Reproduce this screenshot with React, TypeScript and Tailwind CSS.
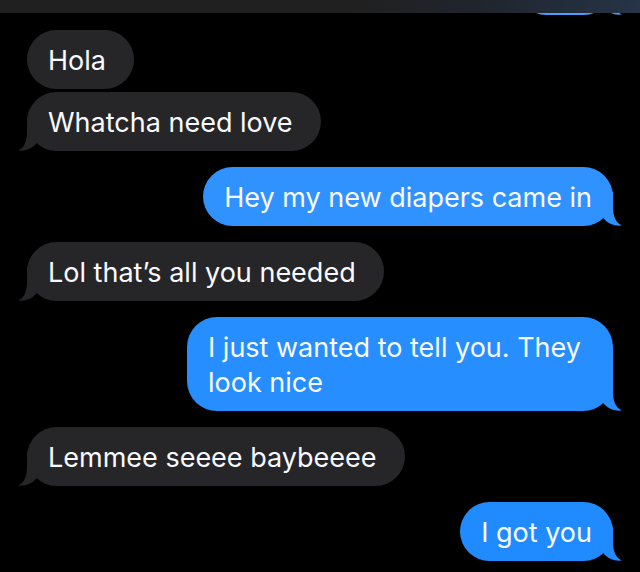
import clsx from 'clsx'

interface Message {
  id: number
  text: string
  mine: boolean
  // last message of a run carries the tail
  tail: boolean
  color: string
}

const messages: Message[] = [
  { id: 1, text: 'Hola', mine: false, tail: false, color: 'bg-[#262629] text-[#262629]' },
  { id: 2, text: 'Whatcha need love', mine: false, tail: true, color: 'bg-[#262629] text-[#262629]' },
  { id: 3, text: 'Hey my new diapers came in', mine: true, tail: true, color: 'bg-[#3092ff] text-[#3092ff]' },
  { id: 4, text: 'Lol that’s all you needed', mine: false, tail: true, color: 'bg-[#262629] text-[#262629]' },
  { id: 5, text: 'I just wanted to tell you. They look nice', mine: true, tail: true, color: 'bg-[#268eff] text-[#268eff]' },
  { id: 6, text: 'Lemmee seeee baybeeee', mine: false, tail: true, color: 'bg-[#262629] text-[#262629]' },
  { id: 7, text: 'I got you', mine: true, tail: true, color: 'bg-[#208bff] text-[#208bff]' },
]

function Tail({ mine }: { mine: boolean }) {
  return (
    <svg
      viewBox="0 0 29 34"
      aria-hidden="true"
      className={clsx('absolute bottom-0 h-[34px] w-[29px]', mine ? '-right-[9px]' : '-left-[9px] -scale-x-100')}
    >
      <path d="M10 0H20V15C20 24 22.5 30.5 29 33.6C21 34.4 15 31.5 10.5 26.5Z" fill="currentColor" />
    </svg>
  )
}

function Bubble({ message }: { message: Message }) {
  return (
    <li className={clsx('flex', message.mine ? 'justify-end' : 'justify-start', message.tail ? 'mb-4' : 'mb-[3px]')}>
      <div
        className={clsx(
          'relative max-w-[426px] rounded-[30px] pt-[13px] pb-[11px] pl-[21px]',
          message.mine ? 'pr-[21px]' : 'pr-7',
          message.color,
        )}
      >
        {message.tail && <Tail mine={message.mine} />}
        <p className="relative text-[27px] leading-[35px] text-[#f8faff]">{message.text}</p>
      </div>
    </li>
  )
}

export default function App() {
  return (
    <main className="relative min-h-screen overflow-hidden bg-black font-['Inter','Liberation_Sans',sans-serif]">
      <header className="absolute inset-x-0 top-0 z-10 h-[13px] bg-linear-to-r from-[#202020] from-55% via-[#20252d] via-75% to-[#253447]" />

      {/* previous message, scrolled up under the header */}
      <div className="flex h-[15px] items-end justify-end overflow-hidden px-[27px]">
        <div className="relative h-[59px] w-24 shrink-0 rounded-[30px] bg-[#4b9dff] text-[#4b9dff]">
          <Tail mine />
        </div>
      </div>

      <ul className="px-[27px] pt-[15px]">
        {messages.map(message => (
          <Bubble key={message.id} message={message} />
        ))}
      </ul>
    </main>
  )
}
